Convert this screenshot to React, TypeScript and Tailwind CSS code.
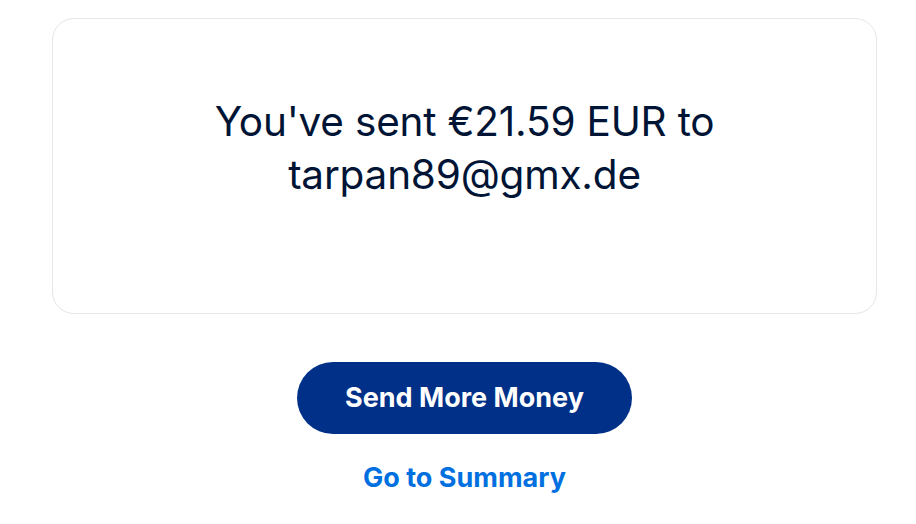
export default function App() {
  return (
    <div className="min-h-screen bg-white pt-[18px] pl-[52px] pr-[39px] font-['Inter',sans-serif]">
      {/* Confirmation card */}
      <div className="h-[296px] rounded-[22px] border border-[#e6e6e6] flex flex-col items-center pt-[76px]">
        <h1 className="text-center text-[40.5px] leading-[53px] text-[#001435] font-normal tracking-[-0.2px]">
          You've sent €21.59 EUR to
          <br />
          tarpan89@gmx.de
        </h1>
      </div>

      {/* Actions */}
      <div className="flex flex-col items-center mt-[48px]">
        <button className="w-[335px] h-[72px] rounded-full bg-[#003087] text-white text-[27px] font-bold">
          Send More Money
        </button>
        <a href="#" className="mt-[24px] text-[27px] font-bold text-[#0070e0]">
          Go to Summary
        </a>
      </div>
    </div>
  );
}
